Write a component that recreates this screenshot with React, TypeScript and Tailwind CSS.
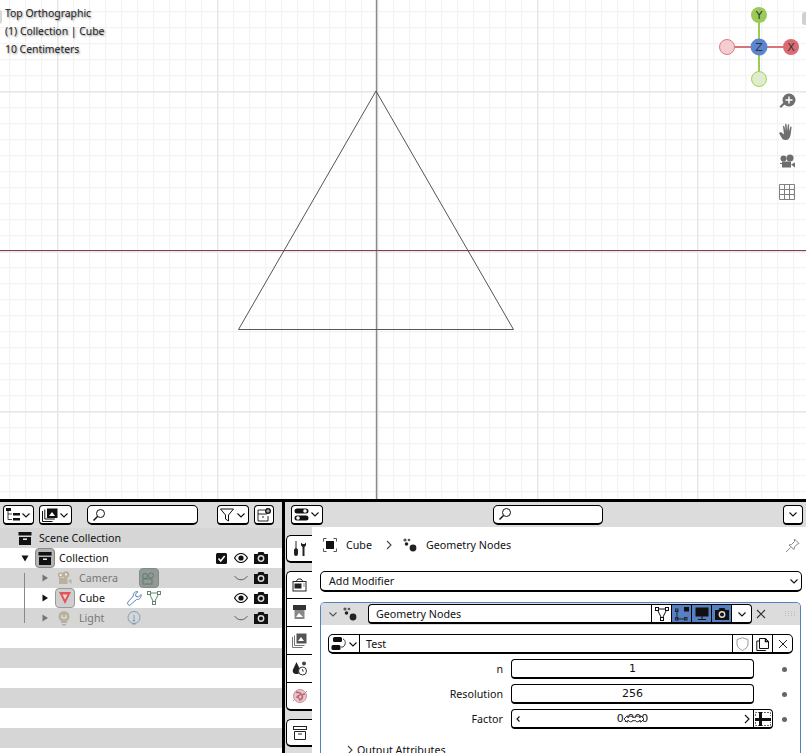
import React from "react";

const F = "font-['Noto_Sans',sans-serif]";
type P = { className?: string };

const Chev = ({ className = "", d = "down" }: P & { d?: "down" | "right" | "left" }) => (
  <svg width="10" height="10" viewBox="0 0 10 10" className={`shrink-0 ${className}`} fill="none" stroke="currentColor" strokeWidth="1.1">
    <path d={d === "down" ? "M1.5 3.5 5 7l3.5-3.5" : d === "right" ? "M3 1l4 4-4 4" : "M6.500 2.500 4 5l2.500 2.500"} />
  </svg>
);
const Search = () => (
  <svg width="14" height="14" viewBox="0 0 14 14" fill="none" stroke="#111" strokeWidth="1">
    <circle cx="8.500" cy="5.500" r="4" />
    <path d="M5.500 8.500 1.500 12.500" strokeWidth="1.400" />
  </svg>
);
const Archive = ({ c = "#111" }: { c?: string }) => (
  <svg width="14" height="13" viewBox="0 0 14 13">
    <rect x="0.500" y="0" width="13" height="3.500" fill={c} />
    <path d="M1 5h12v8H1z" fill={c} />
    <rect x="5" y="6.500" width="4" height="1.400" fill="#fff" />
  </svg>
);
const Eye = () => (
  <svg width="14" height="10" viewBox="0 0 14 10">
    <path d="M.5 5C3 1 5 .5 7 .5S11 1 13.500 5C11 9 9 9.500 7 9.500S3 9 .5 5z" fill="#fff" stroke="#111" strokeWidth="1.200" />
    <circle cx="7" cy="5" r="2.600" fill="#111" />
  </svg>
);
const Cam = () => (
  <svg width="14" height="12" viewBox="0 0 14 12">
    <path d="M0 2h3.500l1-2h5l1 2H14v10H0z" fill="#111" />
    <circle cx="7" cy="6.500" r="3.400" fill="#ddd" />
    <circle cx="7" cy="6.500" r="2" fill="#111" />
  </svg>
);
const Closed = () => (
  <svg width="14" height="7" viewBox="0 0 14 7" fill="none" stroke="#555" strokeWidth="0.900">
    <path d="M.5 1C4 6 10 6 13.500 1" />
  </svg>
);
const MovieCam = ({ c = "#b9b19d" }: { c?: string }) => (
  <svg width="15" height="15" viewBox="0 0 15 15">
    <circle cx="3.600" cy="4" r="2.800" fill={c} />
    <circle cx="9" cy="3.600" r="3.400" fill={c} />
    <rect x="2" y="7" width="8.500" height="6" fill={c} />
    <path d="M11 10l3.500-2v5z" fill={c} />
    <circle cx="9" cy="3.600" r="1" fill="#fff" />
    <circle cx="3.600" cy="4" r="1" fill="#fff" />
  </svg>
);
const MeshTri = ({ c = "#111", w = 14 }: { c?: string; w?: number }) => (
  <svg width={w} height={w} viewBox="0 0 14 14" fill="none" stroke={c} strokeWidth="1">
    <path d="M2 2h10L7 12z" />
    <rect x="0.500" y="0.500" width="3" height="3" fill="#fff" />
    <rect x="10.500" y="0.500" width="3" height="3" fill="#fff" />
    <rect x="5.500" y="10.500" width="3" height="3" fill="#fff" />
  </svg>
);
const GeoNodes = () => (
  <svg width="14" height="14" viewBox="0 0 14 14" fill="#222">
    <circle cx="2" cy="2" r="1.600" fill="#555" />
    <circle cx="6" cy="2" r="1.300" fill="#555" />
    <circle cx="3.500" cy="6" r="1.800" />
    <circle cx="10" cy="10" r="3.400" />
  </svg>
);
const Wrench = ({ c = "#4d72ad", fill = "none" }: { c?: string; fill?: string }) => (
  <svg width="15" height="15" viewBox="0 0 15 15" fill={fill} stroke={c} strokeWidth="0.900">
    <path d="M14 3.500 11.500 6 9 5.500 8.500 3 11 .8C8.500 0 6 2 6.300 5L.8 11.200c-.6 1-.1 2.400.9 2.800 1 .3 1.600 0 2.200-.6L9.500 8.500C12.500 8.700 14.600 6.500 14 3.500z" />
  </svg>
);
const Hbtn = ({ className = "", children }: P & { children: React.ReactNode }) => (
  <div className={`h-[20px] flex items-center bg-white border border-black border-b-2 rounded-[4px] shrink-0 ${className}`}>{children}</div>
);
const Dot = () => <div className="w-[5px] h-[5px] rounded-full bg-[#666] shrink-0" />;

const Restrict = ({ vis = true, check = false }: { vis?: boolean; check?: boolean }) => (
  <div className="ml-auto flex items-center shrink-0 pr-[11px]">
    <div className="w-[19px] flex justify-center">
      {check && (
        <svg width="11" height="11" viewBox="0 0 11 11">
          <rect width="11" height="11" rx="1.500" fill="#111" />
          <path d="M2.500 5.500 4.700 8l4-5" stroke="#fff" strokeWidth="1.600" fill="none" />
        </svg>
      )}
    </div>
    <div className="w-[20px] flex justify-center">{vis ? <Eye /> : <Closed />}</div>
    <div className="w-[20px] flex justify-center"><Cam /></div>
  </div>
);

const Tri = ({ c = "#111" }: { c?: string }) => (
  <svg width="8" height="8" viewBox="0 0 8 8"><path d="M1.500 0.500 7 4 1.500 7.500z" fill={c} /></svg>
);

const Viewport = () => (
  <svg width="806" height="499" className="block absolute inset-0">
    <defs>
      <pattern id="fine" x="9" y="11" width="16" height="16" patternUnits="userSpaceOnUse">
        <path d="M.5 0v16M0 .5h16" stroke="#f3f3f3" strokeWidth="1.600" fill="none" />
      </pattern>
      <pattern id="major" x="57" y="91" width="160" height="160" patternUnits="userSpaceOnUse">
        <path d="M.5 0v160M0 .5h160" stroke="#e6e6e6" strokeWidth="1.800" fill="none" />
      </pattern>
    </defs>
    <rect width="806" height="499" fill="#fff" />
    <rect width="806" height="499" fill="url(#fine)" />
    <rect width="806" height="499" fill="url(#major)" />
    <path d="M376.500 0v499" stroke="#8a8a8a" strokeWidth="1.400" />
    <path d="M0 250.500h806" stroke="#8c3b4a" strokeWidth="1.200" />
    <path d="M376 91 513.500 329.500H238.500z" fill="none" stroke="#555" strokeWidth="1" />
    <path d="M759 15v64" stroke="#9acb58" strokeWidth="2" />
    <path d="M727 47h64" stroke="#d9727a" strokeWidth="2" />
    <circle cx="727" cy="47" r="7.500" fill="#f4cdd1" stroke="#dc7b84" />
    <circle cx="759" cy="79" r="7.500" fill="#e0edcc" stroke="#a2d060" />
    <circle cx="759" cy="15" r="8" fill="#9acb58" />
    <circle cx="791" cy="47" r="8" fill="#db6a72" />
    <circle cx="759" cy="47" r="8.500" fill="#5b86cf" />
    <g fontFamily="DejaVu Sans" fontSize="11" fill="#333" textAnchor="middle">
      <text x="759" y="19">Y</text>
      <text x="791" y="51">X</text>
      <text x="759" y="51">Z</text>
    </g>
    <rect x="802" y="12" width="8" height="13" rx="3" fill="#d0d0d0" />
    <rect x="-4" y="10" width="6" height="14" rx="3" fill="#d8d8d8" />
    <g fill="#6e6e6e">
      <circle cx="789" cy="100" r="6.500" />
      <path d="M785 104 781 108l-1.500-1.500 4-4z" />
      <path d="M789 96.500v7M785.500 100h7" stroke="#fff" strokeWidth="1.400" />
      <path d="M780 132.500l1-.5 3 2.500-1-8c0-1 1.200-1 1.400 0l1 4.500-.3-6.500c0-1 1.400-1 1.500 0l.5 6.500.7-6c.1-1 1.400-1 1.400 0l-.3 6.500 1.400-4.500c.3-1 1.400-.7 1.300.3l-1 7.500c-.5 3.500-2.500 5.200-5 5.200-2.800 0-3.700-1.700-4.700-3.500-.8-1.500-1.500-2.800-1.900-3.500z" />
      <circle cx="783.500" cy="158.500" r="3" />
      <circle cx="790" cy="158" r="3.500" />
      <rect x="782" y="161.500" width="9" height="6" />
      <path d="M791 164.500l4-2v5z" />
      <path d="M780 163h2v1h-2z" />
    </g>
    <path d="M779.500 184.500h15v15h-15zM784.500 184.500v15M789.500 184.500v15M779.500 189.500h15M779.500 194.500h15" fill="none" stroke="#808080" />
  </svg>
);

const Tab = ({ children, first, last }: { children: React.ReactNode; first?: boolean; last?: boolean }) => (
  <div className={`h-[28px] w-[26px] ml-px bg-white border-l border-black flex items-center justify-center ${first ? "rounded-tl-[5px] border-t" : ""} ${last ? "rounded-bl-[5px] border-b-2" : "border-b"}`}>
    {children}
  </div>
);

export default function App() {
  return (
    <div className={`relative w-[806px] h-[753px] overflow-hidden bg-black text-[10.7px] leading-[16px] text-[#111] ${F} flex flex-col`}>
      <div className="relative h-[499px] shrink-0 bg-white">
        <Viewport />
        <div className="absolute left-[5px] top-[4px] text-[10.4px] leading-[18px] text-[#222] [text-shadow:1px_1px_2px_rgba(0,0,0,0.45)]">
          <div>Top Orthographic</div>
          <div>(1) Collection | Cube</div>
          <div>10 Centimeters</div>
        </div>
      </div>
      <div className="flex flex-1 min-h-0 pt-[3px] gap-[3px]">
        {/* Outliner */}
        <div className="w-[282px] shrink-0 bg-white flex flex-col relative overflow-hidden">
          <div className="h-[26px] bg-[#dcdcdc] flex items-center pl-[3px] shrink-0">
            <Hbtn className="w-[31px] gap-[1px] justify-center">
              <svg width="14" height="13" viewBox="0 0 14 13" fill="#111"><rect x="0" y="0" width="5" height="3" /><rect x="7" y="5" width="7" height="2.500" /><rect x="7" y="10" width="7" height="2.500" /><path d="M2 3v8.500h4M2 6h4" stroke="#111" strokeWidth=".8" fill="none" /></svg>
              <Chev />
            </Hbtn>
            <Hbtn className="w-[33px] gap-[1px] ml-[5px] justify-center">
              <svg width="16" height="14" viewBox="0 0 16 14"><rect x="5" y="0.500" width="10.500" height="9.500" fill="#111" /><path d="M.5 3v10.500h10M2.800 1.500v9.500h10" fill="none" stroke="#111" /><path d="M7 8l3-4 3 4z" fill="#fff" /></svg>
              <Chev />
            </Hbtn>
            <Hbtn className="w-[111px] ml-[15px] rounded-[5px] pl-[4px]"><Search /></Hbtn>
            <Hbtn className="w-[32px] ml-[19px] gap-[2px] justify-center">
              <svg width="14" height="14" viewBox="0 0 14 14" fill="none" stroke="#111"><path d="M.5 1h13L8.500 7v6L5.500 11V7z" /></svg>
              <Chev />
            </Hbtn>
            <Hbtn className="w-[20px] ml-[5px] justify-center">
              <svg width="14" height="14" viewBox="0 0 14 14" fill="none" stroke="#111"><path d="M1 2h7M1 2v11h10V8M1 6h9M5 9h2" strokeWidth=".9" /><circle cx="11" cy="3" r="3" fill="#111" stroke="none" /><path d="M9.200 3h3.600M11 1.200v3.600" stroke="#fff" strokeWidth=".8" /></svg>
            </Hbtn>
          </div>
          <div className="h-[20px] bg-[#d6d6d6] flex items-center pl-[18px] shrink-0">
            <Archive />
            <span className="ml-[7px]">Scene Collection</span>
          </div>
          <div className="h-[20px] bg-white flex items-center shrink-0">
            <div className="w-[35px] pl-[21px]"><svg width="8" height="8" viewBox="0 0 8 8"><path d="M.5 1.500h7L4 7.500z" fill="#111" /></svg></div>
            <div className="w-[20px] h-[20px] rounded-[4px] bg-[#b3b3b3] border border-[#888] flex items-center justify-center"><Archive /></div>
            <span className="ml-[4px]">Collection</span>
            <Restrict check />
          </div>
          <div className="h-[20px] bg-[#d6d6d6] flex items-center shrink-0">
            <div className="w-[41px] pl-[41px]"><Tri c="#777" /></div>
            <div className="w-[15px] ml-[16px]"><MovieCam /></div>
            <span className="ml-[7px] text-[#777]">Camera</span>
            <div className="w-[20px] h-[20px] rounded-[4px] bg-[#8f9b94] border border-[#888] flex items-center justify-center ml-[21px]">
              <svg width="15" height="13" viewBox="0 0 15 13" fill="none" stroke="#64786f"><circle cx="4" cy="4" r="2.500" /><circle cx="10" cy="3.500" r="2.500" /><rect x="2" y="7" width="9" height="5" /></svg>
            </div>
            <Restrict vis={false} />
          </div>
          <div className="h-[20px] bg-white flex items-center shrink-0">
            <div className="w-[55px] pl-[41px]"><Tri /></div>
            <div className="w-[20px] h-[20px] rounded-[4px] bg-[#cfcfcf] border border-[#999] flex items-center justify-center">
              <svg width="14" height="14" viewBox="0 0 14 14"><path d="M1 1h12L7 13z" fill="#e0565b" /><path d="M4.500 3.500h5L7 8.500z" fill="#f6d5d5" /></svg>
            </div>
            <span className="ml-[4px] w-[26px]">Cube</span>
            <div className="ml-[22px]"><Wrench /></div>
            <div className="ml-[5px]"><MeshTri c="#5f8a6d" /></div>
            <Restrict />
          </div>
          <div className="h-[20px] bg-[#d6d6d6] flex items-center shrink-0">
            <div className="w-[58px] pl-[41px]"><Tri c="#777" /></div>
            <svg width="14" height="15" viewBox="0 0 14 15" className="-ml-[1px]"><circle cx="7" cy="5.500" r="5.500" fill="#b9b19d" /><rect x="4" y="10" width="6" height="2" fill="#b9b19d" /><rect x="5" y="13" width="4" height="1.500" fill="#b9b19d" /><path d="M5 4v3h4V4" stroke="#fff" fill="none" strokeWidth=".8" /></svg>
            <span className="ml-[8px] w-[26px] text-[#777]">Light</span>
            <svg width="14" height="15" viewBox="0 0 14 15" className="ml-[22px]" fill="none" stroke="#6c8fb5" strokeWidth=".8"><circle cx="7" cy="6.500" r="6" /><path d="M7 4v4M5 13h4" /><circle cx="7" cy="9.500" r=".7" fill="#6c8fb5" /></svg>
            <Restrict vis={false} />
          </div>
          {[0, 1, 2, 3, 4, 5].map((i) => (
            <div key={i} className={`h-[20px] shrink-0 ${i % 2 ? "bg-[#d6d6d6]" : "bg-white"}`} />
          ))}
          <div className="absolute left-[24px] top-[71px] w-px h-[50px] bg-[#888]" />
        </div>

        {/* Properties */}
        <div className="flex-1 min-w-0 bg-white flex flex-col">
          <div className="h-[25px] bg-[#dcdcdc] flex items-center pl-[6px] shrink-0">
            <Hbtn className="w-[32px] gap-[1px] justify-center">
              <svg width="15" height="13" viewBox="0 0 15 13"><rect x=".5" y=".5" width="14" height="5" rx="2.500" fill="#111" /><rect x=".5" y="7.500" width="14" height="5" rx="2.500" fill="#111" /><circle cx="11" cy="3" r="1.800" fill="#fff" /><circle cx="4" cy="10" r="1.800" fill="#fff" /></svg>
              <Chev />
            </Hbtn>
            <Hbtn className="w-[110px] ml-[170px] rounded-[5px] pl-[4px]"><Search /></Hbtn>
            <Hbtn className="w-[20px] ml-[180px] justify-center"><Chev /></Hbtn>
          </div>
          <div className="flex flex-1 min-h-0">
            <div className="w-[27px] bg-[#dcdcdc] pt-[8px] flex flex-col gap-[8px] shrink-0">
              <Tab first last>
                <svg width="16" height="16" viewBox="0 0 16 16" fill="#222"><path d="M3.500 0h1v7l1.500 1.500V13a2 2 0 0 1-4 0V8.500L3.500 7z" /><path d="M9 1.500v3l1.500 1.500v9h2V6L14 4.500v-3l-1.500 1.500h-2z" /></svg>
              </Tab>
              <div className="flex flex-col">
                <Tab first>
                  <svg width="15" height="14" viewBox="0 0 15 14" fill="none" stroke="#222"><rect x="1" y="3.500" width="13" height="9.500" /><path d="M4 3.500 6 1h3l2 2.500" /><rect x="3" y="6" width="6" height="4" fill="#222" /><path d="M11.500 6h1M11.500 8h1" /></svg>
                </Tab>
                <Tab>
                  <svg width="15" height="15" viewBox="0 0 15 15"><rect x="1" y="0" width="13" height="5" fill="#333" /><rect x="2.500" y="5" width="10" height="9" fill="#888" /><path d="M4 12l3-4 4 4z" fill="#fff" /></svg>
                </Tab>
                <Tab>
                  <svg width="15" height="15" viewBox="0 0 15 15"><rect x="4.500" y="0.500" width="10" height="10" fill="#555" /><path d="M.5 4v10.500h10M2.500 2.500v10h10" fill="none" stroke="#777" /><path d="M6 8l3-4 3 4z" fill="#fff" /></svg>
                </Tab>
                <Tab>
                  <svg width="15" height="15" viewBox="0 0 15 15"><path d="M4.500 1 8 8.500c1 3-1 4.500-3.500 4.500S0 11.500 1 8.500z" fill="#222" /><circle cx="12" cy="2.500" r="2" fill="#444" /><circle cx="10.500" cy="10" r="4" fill="#fff" stroke="#333" /><path d="M10.500 8v2h1.500" stroke="#333" fill="none" strokeWidth=".8" /></svg>
                </Tab>
                <Tab last>
                  <svg width="16" height="16" viewBox="0 0 16 16" fill="none"><circle cx="8" cy="8" r="6.500" fill="#e6c4c9" stroke="#c9929a" /><path d="M4 4c2 1 4 0 5 2-1 2-3 1-4 3 2 0 2 2 3 3 2-1 3-3 2-5 1-1 2-1 3-1" stroke="#b76672" strokeWidth="1.500" /><path d="M1 13 3 11M15 3l-2 2" stroke="#c9929a" /></svg>
                </Tab>
              </div>
              <Tab first last>
                <svg width="14" height="14" viewBox="0 0 14 14" fill="none" stroke="#222"><rect x=".5" y=".5" width="13" height="3" /><path d="M1.500 5.500h11v8h-11zM5 8h4" /></svg>
              </Tab>
            </div>
            <div className="flex-1 min-w-0 bg-white pl-[8px] pr-[4px] pt-[8px] flex flex-col">
              <div className="h-[20px] flex items-center shrink-0 pl-[3px]">
                <svg width="14" height="14" viewBox="0 0 14 14" fill="none" stroke="#555"><path d="M.5 3.500v-3h3M10.500.5h3v3M13.500 10.500v3h-3M3.500 13.500h-3v-3" /><rect x="3" y="3" width="8" height="8" fill="#111" stroke="none" /></svg>
                <span className="ml-[9px] w-[26px]">Cube</span>
                <Chev d="right" className="ml-[12px] text-[#444]" />
                <div className="ml-[9px]"><GeoNodes /></div>
                <span className="ml-[9px]">Geometry Nodes</span>
                <svg width="15" height="15" viewBox="0 0 15 15" className="ml-auto mr-[2px]" fill="none" stroke="#888"><path d="M9.500 1 14 5.500l-1.500.5-3 3-.5 2.500L4 7l2.500-.5 3-3zM5.500 9.500 1 14" /></svg>
              </div>
              <Hbtn className="h-[21px] mt-[16px] justify-between pl-[8px] pr-[2px] w-[482px] rounded-[5px]">
                <span>Add Modifier</span>
                <Chev />
              </Hbtn>
              <div className="mt-[10px] w-[481px] border border-b-0 border-[#5680c2] rounded-t-[5px] flex-1 flex flex-col min-h-0 overflow-hidden">
                <div className="h-[22px] bg-[#dcdcdc] flex items-center pl-[7px] shrink-0">
                  <Chev className="text-[#555]" />
                  <div className="ml-[5px]"><GeoNodes /></div>
                  <div className="ml-[11px] h-[20px] w-[384px] flex bg-white border border-black border-b-2 rounded-[4px] overflow-hidden shrink-0">
                    <div className="flex-1 pl-[7px] flex items-center">Geometry Nodes</div>
                    <div className="w-[20px] border-l border-black flex items-center justify-center"><MeshTri w={14} /></div>
                    <div className="w-[20px] bg-[#5680c2] border-l border-black flex items-center justify-center">
                      <svg width="14" height="14" viewBox="0 0 14 14" fill="none" stroke="#223"><path d="M2 3v9h9" /><rect x=".5" y="2" width="2.500" height="2.500" /><rect x=".5" y="10.500" width="2.500" height="2.500" /><rect x="9.500" y="10.500" width="2.500" height="2.500" /><rect x="9" y="0" width="5" height="4.500" fill="#111" stroke="none" /></svg>
                    </div>
                    <div className="w-[20px] bg-[#5680c2] border-l border-black flex items-center justify-center">
                      <svg width="14" height="13" viewBox="0 0 14 13" fill="none"><rect x="1" y="1" width="12" height="8" fill="#111" stroke="#111" /><path d="M7 9v3M3 12.500h8" stroke="#111" /></svg>
                    </div>
                    <div className="w-[20px] bg-[#5680c2] border-l border-black flex items-center justify-center"><Cam /></div>
                    <div className="w-[20px] border-l border-black flex items-center justify-center"><Chev /></div>
                  </div>
                  <svg width="10" height="10" viewBox="0 0 10 10" className="ml-[4px]" stroke="#333" strokeWidth="1.100"><path d="M1 1l8 8M9 1l-8 8" /></svg>
                  <svg width="10" height="6" viewBox="0 0 10 6" className="ml-[19px]" fill="#bbb"><path d="M0 0h1v1H0zM3 0h1v1H3zM6 0h1v1H6zM9 0h1v1H9zM0 2h1v1H0zM3 2h1v1H3zM6 2h1v1H6zM9 2h1v1H9zM0 4h1v1H0zM3 4h1v1H3zM6 4h1v1H6zM9 4h1v1H9z" /></svg>
                </div>
                <div className="px-[7px] pt-[9px] flex-1 bg-white">
                  <div className="h-[20px] w-[465px] flex bg-white border border-black border-b-2 rounded-[5px] overflow-hidden">
                    <div className="w-[31px] flex items-center justify-center gap-[1px] border-r border-black shrink-0">
                      <svg width="16" height="15" viewBox="0 0 16 15" fill="#111"><rect x="2" y="1" width="9" height="5" rx="1.500" /><rect x="0.500" y="9" width="9" height="5" rx="1.500" /><path d="M12 3c3 1 3 6 0 8h-2" fill="none" stroke="#111" strokeWidth=".8" /></svg>
                      <Chev />
                    </div>
                    <div className="flex-1 pl-[6px] flex items-center">Test</div>
                    <div className="w-[20px] border-l border-black flex items-center justify-center">
                      <svg width="13" height="14" viewBox="0 0 13 14" fill="none" stroke="#999"><path d="M6.500.8 12 2.500V7c0 3-2.500 5-5.500 6.500C3.500 12 1 10 1 7V2.500z" /></svg>
                    </div>
                    <div className="w-[20px] border-l border-black flex items-center justify-center">
                      <svg width="14" height="14" viewBox="0 0 14 14" fill="none" stroke="#111"><path d="M3.500 11.500V1.500h6l3 3v7zM3.500 4H.8v9.500h9" /><path d="M9.500 1.500v3h3" strokeWidth="1.500" /></svg>
                    </div>
                    <div className="w-[20px] border-l border-black flex items-center justify-center">
                      <svg width="10" height="10" viewBox="0 0 10 10" stroke="#222"><path d="M1 1l8 8M9 1l-8 8" /></svg>
                    </div>
                  </div>
                  {[
                    ["n", "1"],
                    ["Resolution", "256"],
                  ].map(([l, v]) => (
                    <div key={l} className="flex items-center h-[20px] mt-[5px]">
                      <div className="w-[175px] text-right shrink-0">{l}</div>
                      <Hbtn className="w-[243px] ml-[8px] justify-center font-['DejaVu_Sans',sans-serif] text-[11px]">{v}</Hbtn>
                      <div className="ml-[28px]"><Dot /></div>
                    </div>
                  ))}
                  <div className="flex items-center h-[20px] mt-[5px]">
                    <div className="w-[175px] text-right shrink-0">Factor</div>
                    <div className="ml-[8px] w-[262px] h-[20px] flex bg-white border border-black border-b-2 rounded-[4px] overflow-hidden shrink-0">
                      <div className="w-[242px] border-r border-black flex items-center justify-between px-[1px] relative font-['DejaVu_Sans',sans-serif] text-[11px]">
                        <Chev d="left" />
                        <span>0.000</span>
                        <Chev d="right" />
                        <svg width="24" height="10" viewBox="0 0 26 12" className="absolute left-[110px] top-[4px]" fill="#fff" stroke="#111"><path d="M1 6l4-4v2h2c1-2 3-2 4 0h4c1-2 3-2 4 0h2V2l4 4-4 4V8h-2c-1 2-3 2-4 0h-4c-1 2-3 2-4 0H5v2z" /></svg>
                      </div>
                      <div className="flex-1 flex items-center justify-center">
                        <svg width="16" height="14" viewBox="0 0 16 14"><path d="M.5 4V.5h15V4M.5 10v3.500h15V10" fill="none" stroke="#666" strokeDasharray="2 1" /><rect x="4" y="0" width="3" height="14" fill="#111" /><rect x="0" y="6" width="16" height="3" fill="#111" /></svg>
                      </div>
                    </div>
                    <div className="ml-[9px]"><Dot /></div>
                  </div>
                  <div className="flex items-center mt-[11px] pl-[17px] h-[20px]">
                    <Chev d="right" className="text-[#444]" />
                    <span className="ml-[2px]">Output Attributes</span>
                  </div>
                </div>
              </div>
            </div>
          </div>
        </div>
      </div>
    </div>
  );
}
